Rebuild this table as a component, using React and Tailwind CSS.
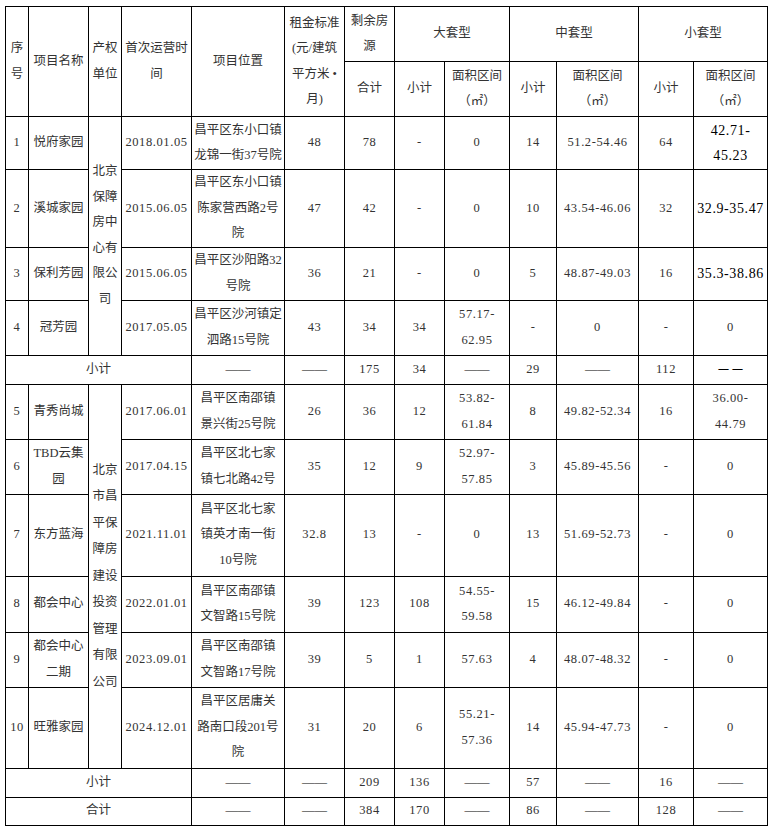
import React from "react";

const L = ({ lines }) =>
  lines.map((t, i) => (
    <React.Fragment key={i}>
      {i > 0 && <br />}
      {t}
    </React.Fragment>
  ));

const isNum = (v) => {
  const s = Array.isArray(v) ? v.join("") : v;
  return /^[\d.\-]+$/.test(s);
};

const Td = ({ v, className = "", ...rest }) => (
  <td
    className={`border border-black text-center align-middle p-0 whitespace-nowrap ${
      isNum(v) ? "tracking-[0.6px]" : ""
    } ${v === "——" ? "text-black" : ""} ${className}`}
    {...rest}
  >
    {Array.isArray(v) ? <L lines={v} /> : v}
  </td>
);

const big = "text-[14px] text-black";

const group1 = [
  ["1", "悦府家园", "2018.01.05", ["昌平区东小口镇", "龙锦一街37号院"], "48", "78", "-", "0", "14", "51.2-54.46", "64", ["42.71-", "45.23"], 53, true],
  ["2", "溪城家园", "2015.06.05", ["昌平区东小口镇", "陈家营西路2号", "院"], "47", "42", "-", "0", "10", "43.54-46.06", "32", "32.9-35.47", 77, true],
  ["3", "保利芳园", "2015.06.05", ["昌平区沙阳路32", "号院"], "36", "21", "-", "0", "5", "48.87-49.03", "16", "35.3-38.86", 53, true],
  ["4", "冠芳园", "2017.05.05", ["昌平区沙河镇定", "泗路15号院"], "43", "34", "34", ["57.17-", "62.95"], "-", "0", "-", "0", 55, false],
];

const group2 = [
  ["5", "青秀尚城", "2017.06.01", ["昌平区南邵镇", "景兴街25号院"], "26", "36", "12", ["53.82-", "61.84"], "8", "49.82-52.34", "16", ["36.00-", "44.79"], 55],
  ["6", ["TBD云集", "园"], "2017.04.15", ["昌平区北七家", "镇七北路42号"], "35", "12", "9", ["52.97-", "57.85"], "3", "45.89-45.56", "-", "0", 55],
  ["7", "东方蓝海", "2021.11.01", ["昌平区北七家", "镇英才南一街", "10号院"], "32.8", "13", "-", "0", "13", "51.69-52.73", "-", "0", 82],
  ["8", "都会中心", "2022.01.01", ["昌平区南邵镇", "文智路15号院"], "39", "123", "108", ["54.55-", "59.58"], "15", "46.12-49.84", "-", "0", 56],
  ["9", ["都会中心", "二期"], "2023.09.01", ["昌平区南邵镇", "文智路17号院"], "39", "5", "1", "57.63", "4", "48.07-48.32", "-", "0", 55],
  ["10", "旺雅家园", "2024.12.01", ["昌平区居庸关", "路南口段201号", "院"], "31", "20", "6", ["55.21-", "57.36"], "14", "45.94-47.73", "-", "0", 81],
];

const widths = [23, 60, 33, 70, 93, 60, 50, 50, 65, 47, 82, 55, 74];

const Row = ({ r, owner }) => (
  <tr style={{ height: r[12] }}>
    <Td v={r[0]} />
    <Td v={r[1]} />
    {owner}
    <Td v={r[2]} />
    <Td v={r[3]} />
    <Td v={r[4]} />
    <Td v={r[5]} />
    <Td v={r[6]} />
    <Td v={r[7]} />
    <Td v={r[8]} />
    <Td v={r[9]} />
    <Td v={r[10]} />
    <Td v={r[11]} className={r[13] ? big : ""} />
  </tr>
);

const SumRow = ({ label, vals, h, lastBig }) => (
  <tr className={h}>
    <Td v={label} colSpan={4} />
    {vals.map((v, i) => (
      <Td key={i} v={v} className={lastBig && i === vals.length - 1 ? big : ""} />
    ))}
  </tr>
);

export default function App() {
  return (
    <div className="bg-white min-h-[830px] pt-[6px] pl-[5px]">
      <table className="table-fixed border-collapse w-[762px] text-[12.5px] leading-[25.5px] text-[#333] font-['Liberation_Serif','Noto_Sans_CJK_SC',serif]">
        <colgroup>
          {widths.map((w, i) => (
            <col key={i} style={{ width: w }} />
          ))}
        </colgroup>
        <tbody>
          <tr className="h-[55px]">
            <Td v={["序", "号"]} rowSpan={2} />
            <Td v="项目名称" rowSpan={2} />
            <Td v={["产权", "单位"]} rowSpan={2} />
            <Td v={["首次运营时", "间"]} rowSpan={2} />
            <Td v="项目位置" rowSpan={2} />
            <Td v={["租金标准", "(元/建筑", "平方米 •", "月)"]} rowSpan={2} />
            <Td v={["剩余房", "源"]} />
            <Td v="大套型" colSpan={2} />
            <Td v="中套型" colSpan={2} />
            <Td v="小套型" colSpan={2} />
          </tr>
          <tr className="h-[55px]">
            <Td v="合计" />
            <Td v="小计" />
            <Td v={["面积区间", "（㎡）"]} />
            <Td v="小计" />
            <Td v={["面积区间", "（㎡）"]} />
            <Td v="小计" />
            <Td v={["面积区间", "（㎡）"]} />
          </tr>
          {group1.map((r, i) => (
            <Row
              key={r[0]}
              r={r}
              owner={
                i === 0 ? (
                  <Td v={["北京", "保障", "房中", "心有", "限公", "司"]} rowSpan={4} />
                ) : null
              }
            />
          ))}
          <SumRow
            label="小计"
            vals={["——", "——", "175", "34", "——", "29", "——", "112", "－－"]}
            h="h-[29px]"
            lastBig
          />
          {group2.map((r, i) => (
            <Row
              key={r[0]}
              r={r}
              owner={
                i === 0 ? (
                  <Td
                    v={["北京", "市昌", "平保", "障房", "建设", "投资", "管理", "有限", "公司"]}
                    rowSpan={6}
                    className="leading-[26.5px]"
                  />
                ) : null
              }
            />
          ))}
          <SumRow
            label="小计"
            vals={["——", "——", "209", "136", "——", "57", "——", "16", "——"]}
            h="h-[29px]"
          />
          <SumRow
            label="合计"
            vals={["——", "——", "384", "170", "——", "86", "——", "128", "——"]}
            h="h-[28px]"
          />
        </tbody>
      </table>
    </div>
  );
}
